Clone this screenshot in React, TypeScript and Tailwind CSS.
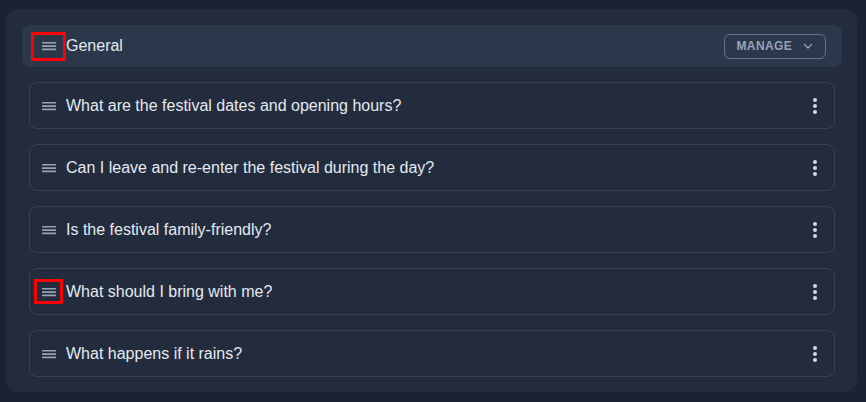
import React from 'react';

const questions = [
    'What are the festival dates and opening hours?',
    'Can I leave and re-enter the festival during the day?',
    'Is the festival family-friendly?',
    'What should I bring with me?',
    'What happens if it rains?',
];

const DragHandle = () => (
    <svg width="14" height="10" viewBox="0 0 14 10" fill="none">
        <rect x="0" y="1" width="14" height="1.6" rx="0.5" fill="#9aa3b2" />
        <rect x="0" y="4.3" width="14" height="1.6" rx="0.5" fill="#9aa3b2" />
        <rect x="0" y="7.6" width="14" height="1.6" rx="0.5" fill="#9aa3b2" />
    </svg>
);

const Dots = () => (
    <svg width="6" height="18" viewBox="0 0 6 18">
        <circle cx="3" cy="3" r="2" fill="#d3d9e3" />
        <circle cx="3" cy="9" r="2" fill="#d3d9e3" />
        <circle cx="3" cy="15" r="2" fill="#d3d9e3" />
    </svg>
);

const App: React.FC = () => {
    return (
        <div className="w-[866px] h-[402px] bg-[#1b2231] pt-[9px] pl-[6px]" style={{ fontFamily: '"Liberation Sans", Arial, sans-serif' }}>
            <div className="w-[851px] h-[383px] bg-[#222c3d] rounded-xl pt-4 pl-4 pr-[15px] pb-[15px] flex flex-col">
                <div className="h-[42px] bg-[#2b374a] rounded-lg flex items-center pl-[9px] pr-4">
                    <div className="w-[35px] h-[29px] border-[3px] border-[#ff0000] flex items-center justify-center">
                        <DragHandle />
                    </div>
                    <span className="text-[16px] text-[#e4e9f0]">General</span>
                    <button className="ml-auto h-[25px] pl-3 pr-[11px] border border-[#667386] rounded-md flex items-center gap-[10px] text-[12px] font-bold tracking-[0.03em] text-[#97a3b6]">
                        MANAGE
                        <svg width="12" height="12" viewBox="0 0 24 24" fill="none" stroke="#97a3b6" strokeWidth="2.6" strokeLinecap="round" strokeLinejoin="round">
                            <path d="M5 9l7 7 7-7" />
                        </svg>
                    </button>
                </div>
                <div className="flex flex-col gap-[15px] mt-[15px] px-[7px]">
                    {questions.map((q, i) => (
                        <div key={q} className="h-[47px] border border-[#364256] rounded-lg flex items-center pl-[4px] pr-[11px]">
                            <div className={`w-[29px] h-[25px] border-[3px] flex items-center justify-center ${i === 3 ? 'border-[#ff0000]' : 'border-transparent'}`}>
                                <DragHandle />
                            </div>
                            <span className="ml-[3px] text-[16px] text-[#e4e9f0]">{q}</span>
                            <div className="ml-auto w-4 flex justify-center">
                                <Dots />
                            </div>
                        </div>
                    ))}
                </div>
            </div>
        </div>
    );
};

export default App;
